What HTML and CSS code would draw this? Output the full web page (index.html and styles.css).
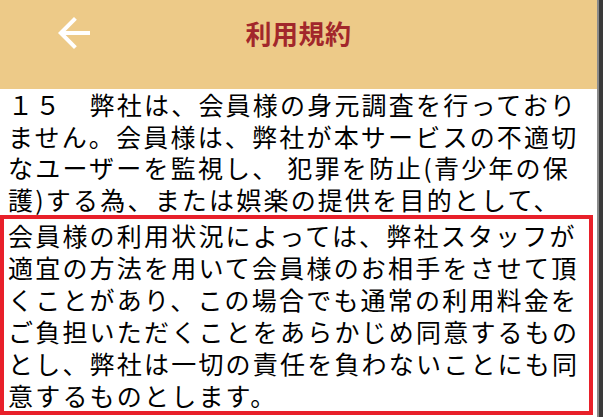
FILE: index.html
```html
<!DOCTYPE html>
<html lang="ja">
<head>
<meta charset="utf-8">
<title>利用規約</title>
<link rel="stylesheet" href="styles.css">
</head>
<body>
<div class="screen">
  <div class="main">
    <header class="appbar">
      <svg class="back" viewBox="0 0 24 24" width="48" height="48" aria-hidden="true">
        <path d="M20 11H7.83l5.59-5.59L12 4l-8 8 8 8 1.41-1.41L7.83 13H20v-2z" fill="#ffffff"/>
      </svg>
      <h1 class="title">利用規約</h1>
    </header>
    <div class="content">
      <p class="text upper">１５　弊社は、会員様の身元調査を行っており<br>ません。会員様は、弊社が本サービスの不適切<br>なユーザーを監視し、 犯罪を防止(青少年の保<br>護)する為、または娯楽の提供を目的として、</p>
      <p class="text boxed">会員様の利用状況によっては、弊社スタッフが<br>適宜の方法を用いて会員様のお相手をさせて頂<br>くことがあり、この場合でも通常の利用料金を<br>ご負担いただくことをあらかじめ同意するもの<br>とし、弊社は一切の責任を負わないことにも同<br>意するものとします。</p>
    </div>
  </div>
  <div class="edge"></div>
</div>
</body>
</html>
```

FILE: styles.css
```css
html, body {
  margin: 0;
  padding: 0;
  background: #ffffff;
}
.screen {
  display: flex;
  width: 603px;
  height: 417px;
  overflow: hidden;
}
.main {
  flex: 1;
  display: flex;
  flex-direction: column;
  background: #ffffff;
}
.edge {
  width: 4px;
  background: #3a3a3a;
  border-left: 2px solid #8a8a8a;
}
.appbar {
  position: relative;
  height: 89px;
  background: #edca88;
  display: flex;
  justify-content: center;
}
.back {
  position: absolute;
  left: 50px;
  top: 9px;
}
.title {
  margin: 14px 0 0 0;
  font-family: "Noto Sans CJK JP", "Noto Sans", sans-serif;
  font-size: 26px;
  font-weight: 700;
  line-height: 38px;
  color: #a2272b;
  letter-spacing: 0.5px;
}
.content {
  display: flex;
  flex-direction: column;
}
.text {
  margin: 0;
  font-family: "Noto Sans CJK JP", "Noto Sans", sans-serif;
  font-size: 25px;
  letter-spacing: 2.2px;
  color: #000000;
  white-space: nowrap;
}
.upper {
  padding-left: 8px;
  line-height: 31.5px;
  height: 126px;
}
.boxed {
  border: 4px solid #e8202a;
  padding-left: 4px;
  line-height: 32px;
  height: 192px;
  width: 581px;
}
```
